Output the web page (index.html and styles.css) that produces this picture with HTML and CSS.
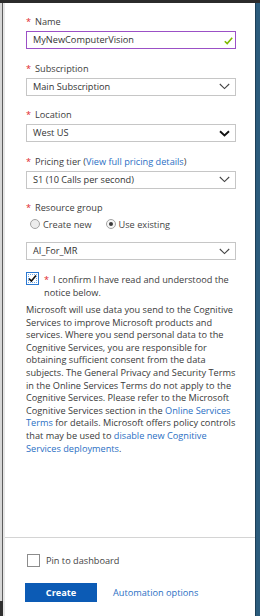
FILE: index.html
```html
<!DOCTYPE html>
<html lang="en">
<head>
<meta charset="utf-8">
<title>Create Computer Vision</title>
<link rel="stylesheet" href="styles.css">
</head>
<body>
<div class="frame">
  <div class="topbar"></div>
  <div class="row">
    <div class="leftedge">
      <div class="left-upper"></div>
      <div class="left-lower"></div>
    </div>
    <div class="panel">
      <div class="main">
        <div class="field">
          <div class="label"><span class="req">*</span>Name</div>
          <div class="input valid">
            <span class="val">MyNewComputerVision</span>
            <svg class="check" width="9" height="8" viewBox="0 0 9 8"><polyline points="0.8,4.2 3.2,6.6 8.2,0.8" fill="none" stroke="#7fba00" stroke-width="1.6"/></svg>
          </div>
        </div>
        <div class="field">
          <div class="label"><span class="req">*</span>Subscription</div>
          <div class="input select">
            <span class="val">Main Subscription</span>
            <svg class="chev" width="11" height="7" viewBox="0 0 11 7"><polyline points="0.8,1 5.5,5.6 10.2,1" fill="none" stroke="#444" stroke-width="1.1"/></svg>
          </div>
        </div>
        <div class="field">
          <div class="label"><span class="req">*</span>Location</div>
          <div class="input select">
            <span class="val">West US</span>
            <svg class="chev" width="11" height="7" viewBox="0 0 11 7"><polyline points="1,1.2 5.5,5.4 10,1.2" fill="none" stroke="#111" stroke-width="1.9"/></svg>
          </div>
        </div>
        <div class="field">
          <div class="label"><span class="req">*</span>Pricing tier (<a class="link" href="#">View full pricing details</a>)</div>
          <div class="input select">
            <span class="val">S1 (10 Calls per second)</span>
            <svg class="chev" width="11" height="7" viewBox="0 0 11 7"><polyline points="0.8,1 5.5,5.6 10.2,1" fill="none" stroke="#444" stroke-width="1.1"/></svg>
          </div>
        </div>
        <div class="field group">
          <div class="label"><span class="req">*</span>Resource group</div>
          <div class="radios">
            <label class="radio"><span class="dot"></span>Create new</label>
            <label class="radio on"><span class="dot"></span>Use existing</label>
          </div>
          <div class="input select ai">
            <span class="val">AI_For_MR</span>
            <svg class="chev" width="11" height="7" viewBox="0 0 11 7"><polyline points="0.8,1 5.5,5.6 10.2,1" fill="none" stroke="#444" stroke-width="1.1"/></svg>
          </div>
        </div>
        <div class="confirm">
          <span class="box checked">
            <svg width="11" height="11" viewBox="0 0 11 11"><polyline points="2,5.6 4.4,8 9,2.6" fill="none" stroke="#111" stroke-width="1.6"/></svg>
          </span>
          <div class="confirm-text"><span class="req">*</span>I confirm I have read and understood the notice below.</div>
        </div>
        <p class="notice">Microsoft will use data you send to the Cognitive Services to improve Microsoft products and services. Where you send personal data to the Cognitive Services, you are responsible for obtaining sufficient consent from the data subjects. The General Privacy and Security Terms in the Online Services Terms do not apply to the Cognitive Services. Please refer to the Microsoft Cognitive Services section in the <a class="link" href="#">Online Services Terms</a> for details. Microsoft offers policy controls that may be used to <a class="link" href="#">disable new Cognitive Services deployments</a>.</p>
      </div>
      <div class="footer">
        <div class="pin"><span class="box"></span>Pin to dashboard</div>
        <div class="actions">
          <button class="create" type="button">Create</button>
          <a class="link auto" href="#">Automation options</a>
        </div>
      </div>
    </div>
    <div class="rightedge"></div>
  </div>
</div>
</body>
</html>
```

FILE: styles.css
```css
* { box-sizing: border-box; }
html, body {
  margin: 0;
  padding: 0;
  background: #ffffff;
}
body {
  width: 260px;
  height: 616px;
  overflow: hidden;
  font-family: "Open Sans", "Noto Sans", "Liberation Sans", sans-serif;
  font-size: 9.2px;
  color: #3a3a3a;
}
.frame {
  display: flex;
  flex-direction: column;
  height: 616px;
}
.topbar {
  height: 3px;
  background: #2b2b2b;
  flex: none;
}
.row {
  flex: 1;
  display: flex;
  min-height: 0;
}
.leftedge {
  width: 5px;
  display: flex;
  flex-direction: column;
  flex: none;
}
.left-upper {
  flex: 1;
  background: linear-gradient(to right, #d6d6d6 0 2px, #5c5c5c 2px 3px, #e6e6e6 3px 5px);
}
.left-lower {
  height: 15px;
  background: linear-gradient(to right, #2f2f2f 0 3px, #e6e6e6 3px 5px);
}
.rightedge {
  width: 5px;
  flex: none;
  background: linear-gradient(to right, #1d3f57 0 1px, #2c5c7c 1px 5px);
}
.panel {
  flex: 1;
  display: flex;
  flex-direction: column;
  background: #fff;
  min-width: 0;
}
.main {
  flex: 1;
  padding: 12px 19px 0 21px;
  overflow: hidden;
}
.field {
  margin-bottom: 12.5px;
}
.label {
  height: 13px;
  line-height: 13px;
  color: #3d3d3d;
  white-space: nowrap;
}
.req {
  display: inline-block;
  width: 9px;
  color: #e0262a;
}
.link {
  color: #2b6fc4;
  text-decoration: none;
}
.input {
  margin-top: 3px;
  height: 18px;
  width: 210px;
  border: 1px solid #c6c6c6;
  display: flex;
  align-items: center;
  justify-content: space-between;
  padding: 0 5px 0 6px;
  color: #333;
  line-height: 16px;
}
.input.valid {
  border-color: #9b50c6;
  padding-right: 2px;
}
.check {
  display: block;
  margin-top: 1px;
}
.chev {
  display: block;
}
.radios {
  display: flex;
  align-items: center;
  height: 14px;
  margin-top: 3px;
  padding-left: 4px;
  gap: 14px;
  color: #444;
}
.radio {
  display: flex;
  align-items: center;
  gap: 3px;
}
.dot {
  width: 10px;
  height: 10px;
  border-radius: 50%;
  border: 1px solid #a3a3a3;
  background: #ececec;
  display: flex;
  align-items: center;
  justify-content: center;
}
.radio.on .dot {
  background: #f6f6f6;
}
.radio.on .dot::after {
  content: "";
  width: 4px;
  height: 4px;
  border-radius: 50%;
  background: #3a3a3a;
}
.input.ai {
  margin-top: 11px;
}
.group {
  margin-bottom: 12px;
}
.confirm {
  display: flex;
  align-items: flex-start;
  gap: 5px;
}
.box {
  width: 13px;
  height: 13px;
  border: 1px solid #8c8c8c;
  background: #fff;
  flex: none;
  display: flex;
  align-items: center;
  justify-content: center;
}
.box.checked {
  border-color: #2a78d2;
  outline: 1px dotted #6ea6e4;
  outline-offset: -3px;
}
.box.checked svg {
  display: block;
}
.confirm-text {
  line-height: 13px;
  color: #3d3d3d;
  margin-top: 0.5px;
}
.confirm-text .req {
  width: 9px;
}
.notice {
  margin: 5.5px 0 0;
  width: 210px;
  line-height: 12.6px;
  color: #3a3a3a;
}
.footer {
  flex: none;
  border-top: 1px solid #d4d4d4;
  padding: 15px 0 14px 20px;
}
.pin {
  display: flex;
  align-items: center;
  gap: 6px;
  height: 14px;
  padding-left: 2px;
  color: #444;
}
.actions {
  margin-top: 16px;
  display: flex;
  align-items: center;
  gap: 16px;
}
.create {
  width: 72px;
  height: 19px;
  margin: 0;
  padding: 0;
  border: none;
  background: #0c5bb5;
  color: #fff;
  font-family: inherit;
  font-size: 9.2px;
  font-weight: 700;
}
.auto {
  line-height: 19px;
}
```
